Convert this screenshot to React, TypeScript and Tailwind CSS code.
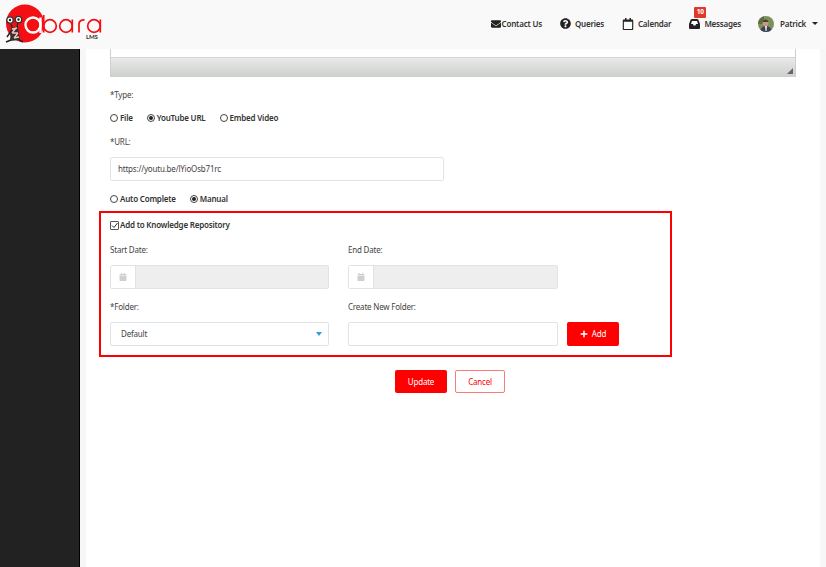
import { FaEnvelope, FaQuestionCircle, FaRegCalendar, FaCalendar, FaPlus } from "react-icons/fa";

function Logo() {
  return (
    <svg width="104" height="49" viewBox="0 0 104 49" className="shrink-0">
      <circle cx="25" cy="23.500" r="19" fill="#f40f14" />
      <path d="M12 27 L10 22 M17 27 L18 22" stroke="#222" strokeWidth="1.2" />
      <circle cx="10" cy="20" r="3.2" fill="#fff" stroke="#333" strokeWidth="1.3" />
      <circle cx="18.500" cy="19.500" r="3.2" fill="#fff" stroke="#333" strokeWidth="1.3" />
      <circle cx="10" cy="20" r="1.2" fill="#222" />
      <circle cx="18.500" cy="19.500" r="1.2" fill="#222" />
      <path d="M11 27 L18 27 L20 40 L10 41 Z" fill="#333" />
      <path d="M12 29 L17 28 M16 28 L12 33 M12 33 L18 33 M18 33 L14 38 M14 38 L19 37" stroke="#f8c4c4" strokeWidth="1.3" fill="none" />
      <path d="M11 40 L6 42 M19 40 L23 42 M11 31 L7 37" stroke="#222" strokeWidth="1.4" />
      <circle cx="33" cy="25" r="7.500" fill="none" stroke="#fff" strokeWidth="2.4" />
      <path d="M40.500 17.500 V33" stroke="#fff" strokeWidth="2.4" />
      <circle cx="50" cy="26" r="6.300" fill="none" stroke="#f40f14" strokeWidth="1.7" />
      <path d="M43.700 15 V32.500" stroke="#f40f14" strokeWidth="1.7" />
      <circle cx="66" cy="26" r="6.300" fill="none" stroke="#f40f14" strokeWidth="1.7" />
      <path d="M72.300 19.500 V32.500" stroke="#f40f14" strokeWidth="1.7" />
      <path d="M79 32.500 V24 Q79 19.800 84.500 19.800" fill="none" stroke="#f40f14" strokeWidth="1.7" />
      <circle cx="94" cy="26" r="6.300" fill="none" stroke="#f40f14" strokeWidth="1.7" />
      <path d="M100.300 19.500 V32.500" stroke="#f40f14" strokeWidth="1.7" />
      <text x="86" y="38.500" fontSize="6" fontWeight="700" fill="#333" fontFamily="Lato, sans-serif">LMS</text>
    </svg>
  );
}

function Radio({ on, label }: { on?: boolean; label: string }) {
  return (
    <span className="flex items-center gap-[2px] font-semibold text-[#333]">
      <span className="flex h-[8px] w-[8px] items-center justify-center rounded-full border border-[#444] bg-white">
        {on && <span className="h-[4px] w-[4px] rounded-full bg-[#222]" />}
      </span>
      {label}
    </span>
  );
}

function DateField({ width }: { width: string }) {
  return (
    <div className={`flex h-[24px] ${width} rounded-[2px] border border-[#e2e3ea]`}>
      <span className="flex w-[24px] items-center justify-center bg-white">
        <FaCalendar size={8} className="text-[#cfcfcf]" />
      </span>
      <span className="flex-1 border-l border-[#e2e3ea] bg-[#eee]" />
    </div>
  );
}

export default function App() {
  return (
    <div className="flex h-[567px] w-[826px] flex-col overflow-hidden bg-white text-[8px] tracking-[-0.2px] text-[#444] [font-family:'Noto_Sans',sans-serif]">
      <header className="flex h-[49px] shrink-0 items-center justify-between bg-[#f9f9f9] pr-[8px] font-semibold text-[#333]">
        <Logo />
        <nav className="flex items-center pb-[2px]">
          <span className="flex items-center gap-[1px]"><FaEnvelope size={10} className="text-[#222]" />Contact Us</span>
          <span className="ml-[18px] flex items-center gap-[4px]"><FaQuestionCircle size={11} className="text-[#222]" />Queries</span>
          <span className="ml-[18px] flex items-center gap-[4px]"><FaRegCalendar size={12} className="text-[#222]" />Calendar</span>
          <span className="relative ml-[18px] flex items-center gap-[4px]">
            <svg width="11" height="10" viewBox="0 0 11 10">
              <path d="M0 5 L1.500 1 Q2 0 3 0 H8 Q9 0 9.500 1 L11 5 V9 Q11 10 10 10 H1 Q0 10 0 9 Z" fill="#222" />
              <path d="M2 5 L3 2 H8 L9 5 H7 L6.500 6.500 H4.500 L4 5 Z" fill="#fff" />
            </svg>
            Messages
            <span className="absolute -top-[11px] left-[5px] flex h-[11px] w-[12px] items-center justify-center rounded-[1px] bg-[#e0392b] text-[6.5px] font-bold text-white">10</span>
          </span>
          <svg width="16" height="16" viewBox="0 0 16 16" className="ml-[17px]">
            <clipPath id="av"><circle cx="8" cy="8" r="8" /></clipPath>
            <g clipPath="url(#av)">
              <rect width="16" height="16" fill="#7f8f5a" />
              <rect width="6" height="8" fill="#5d6d44" />
              <path d="M2 16 Q3 10 8 10 Q13 10 14 16 Z" fill="#3c4258" />
              <circle cx="7.500" cy="7" r="3" fill="#c79a80" />
              <path d="M4.500 6 Q5 3 8 3.500 Q10.500 4 10.500 6 Z" fill="#4a4038" />
              <path d="M7 10 H9 L8.500 15 H7.500 Z" fill="#eee" />
            </g>
          </svg>
          <span className="ml-[6px]">Patrick</span>
          <span className="ml-[6px] h-0 w-0 border-x-[3px] border-t-[3.5px] border-x-transparent border-t-[#222]" />
        </nav>
      </header>
      <div className="flex min-h-0 flex-1">
        <aside className="w-[80px] shrink-0 border-r border-black bg-[#222]" />
        <div className="w-[6px] shrink-0 bg-[#f7f7f7]" />
        <main className="min-w-0 flex-1 pl-[13px]">
          <div className="ml-[11px] h-[28px] w-[686px] border-x border-b border-[#cfcfcf] bg-white pt-[8px]">
            <div className="flex h-[19px] items-end justify-end border-t border-[#d4d4d4] bg-[linear-gradient(#e8e9e8,#cfd1cf)] pr-[2px] pb-[2px]">
              <span className="h-0 w-0 border-b-[6px] border-l-[6px] border-b-[#666] border-l-transparent" />
            </div>
          </div>
          <div className="ml-[11px] mt-[12px] leading-[12px]">
            <p>*Type:</p>
            <div className="mt-[11px] flex gap-[14px]">
              <Radio label="File" />
              <Radio on label="YouTube URL" />
              <Radio label="Embed Video" />
            </div>
            <p className="mt-[12px]">*URL:</p>
            <div className="mt-[9px] flex h-[24px] w-[334px] items-center rounded-[2px] border border-[#e2e3ea] px-[7px]">https://youtu.be/lYioOsb71rc</div>
            <div className="mt-[12px] flex gap-[14px]">
              <Radio label="Auto Complete" />
              <Radio on label="Manual" />
            </div>
          </div>
          <section className="mt-[6px] h-[146px] w-[573px] border-2 border-[#f00] pl-[9px]">
            <label className="mt-[6px] flex items-center gap-[1px] font-semibold leading-[12px] text-[#333]">
              <span className="flex h-[9px] w-[9px] items-center justify-center rounded-[1px] border border-[#555]">
                <svg width="7" height="7" viewBox="0 0 7 7"><path d="M1 3.500 L3 5.500 L6.500 1" fill="none" stroke="#333" strokeWidth="1" /></svg>
              </span>
              Add to Knowledge Repository
            </label>
            <div className="mt-[13px] grid grid-cols-[238px_auto] justify-start leading-[12px]">
              <p>Start Date:</p>
              <p>End Date:</p>
            </div>
            <div className="mt-[9px] grid grid-cols-[238px_auto] justify-start">
              <DateField width="w-[219px]" />
              <DateField width="w-[210px]" />
            </div>
            <div className="mt-[12px] grid grid-cols-[238px_auto] justify-start leading-[12px]">
              <p>*Folder:</p>
              <p>Create New Folder:</p>
            </div>
            <div className="mt-[9px] grid grid-cols-[238px_auto] justify-start">
              <div className="flex h-[24px] w-[219px] items-center justify-between rounded-[2px] border border-[#e2e3ea] pr-[6px] pl-[10px]">
                Default
                <span className="h-0 w-0 border-x-[3.500px] border-t-[4px] border-x-transparent border-t-[#3a9ad9]" />
              </div>
              <div className="flex">
                <div className="h-[24px] w-[210px] rounded-[2px] border border-[#e2e3ea]" />
                <button className="ml-[9px] flex h-[24px] w-[52px] items-center justify-center gap-[4px] rounded-[2px] bg-[#f00] text-white">
                  <FaPlus size={8} />Add
                </button>
              </div>
            </div>
          </section>
          <div className="mt-[13px] ml-[296px] flex gap-[8px] leading-none">
            <button className="h-[23px] w-[52px] rounded-[2px] bg-[#f00] text-[8px] text-white">Update</button>
            <button className="h-[23px] w-[50px] rounded-[2px] border border-[#f77] bg-white text-[8px] text-[#f00]">Cancel</button>
          </div>
        </main>
        <div className="w-[6px] shrink-0 bg-[#f7f7f7]" />
      </div>
    </div>
  );
}
